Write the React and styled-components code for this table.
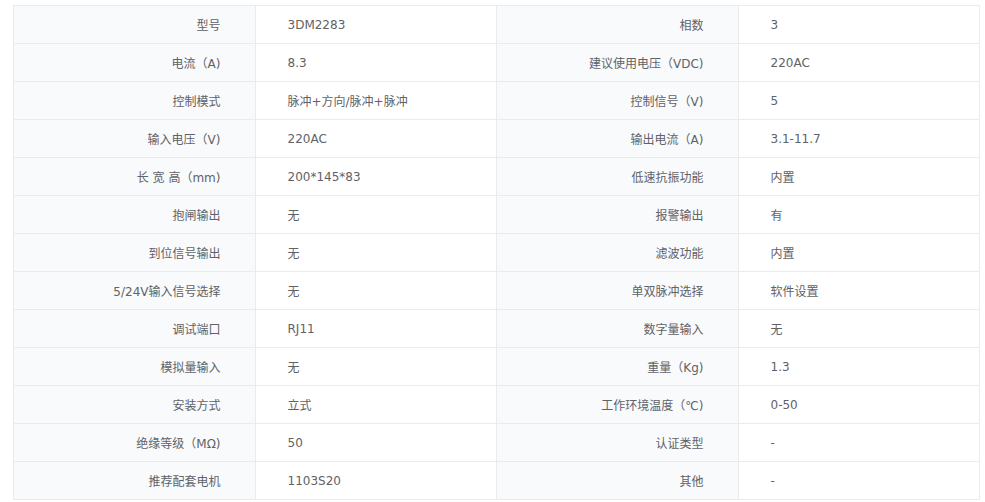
import styled, { createGlobalStyle } from "styled-components";

const rows = [
  ["型号", "3DM2283", "相数", "3"],
  ["电流（A)", "8.3", "建议使用电压（VDC)", "220AC"],
  ["控制模式", "脉冲+方向/脉冲+脉冲", "控制信号（V)", "5"],
  ["输入电压（V)", "220AC", "输出电流（A)", "3.1-11.7"],
  ["长 宽 高（mm)", "200*145*83", "低速抗振功能", "内置"],
  ["抱闸输出", "无", "报警输出", "有"],
  ["到位信号输出", "无", "滤波功能", "内置"],
  ["5/24V输入信号选择", "无", "单双脉冲选择", "软件设置"],
  ["调试端口", "RJ11", "数字量输入", "无"],
  ["模拟量输入", "无", "重量（Kg)", "1.3"],
  ["安装方式", "立式", "工作环境温度（℃)", "0-50"],
  ["绝缘等级（MΩ)", "50", "认证类型", "-"],
  ["推荐配套电机", "1103S20", "其他", "-"],
];

const GlobalStyle = createGlobalStyle`
  body {
    margin: 0;
    background: #ffffff;
    font-family: "DejaVu Sans", "Noto Sans CJK SC", sans-serif;
  }
`;

const Page = styled.div`
  padding: 5px 6px 0 13px;
`;

const Table = styled.table`
  width: 967px;
  border-collapse: collapse;
  table-layout: fixed;
  font-size: 12px;
  color: #5f6266;
`;

const Row = styled.tr`
  height: 38px;
`;

const Cell = styled.td`
  border: 1px solid #e9ebef;
  padding: 0 34px 0 32px;
  text-align: ${(p) => (p.$label ? "right" : "left")};
  background: ${(p) => (p.$label ? "#f9fafc" : "#ffffff")};
  white-space: nowrap;
`;

export default function App() {
  return (
    <>
      <GlobalStyle />
      <Page>
        <Table>
          <tbody>
            {rows.map((r, i) => (
              <Row key={i}>
                <Cell $label>{r[0]}</Cell>
                <Cell>{r[1]}</Cell>
                <Cell $label>{r[2]}</Cell>
                <Cell>{r[3]}</Cell>
              </Row>
            ))}
          </tbody>
        </Table>
      </Page>
    </>
  );
}
